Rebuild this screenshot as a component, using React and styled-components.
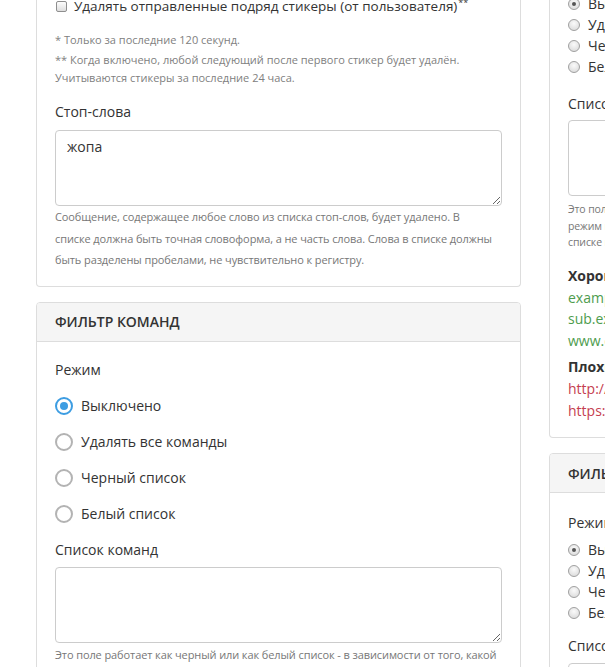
import React from "react";
import styled, { createGlobalStyle } from "styled-components";

/* ---------- global ---------- */

const GlobalStyle = createGlobalStyle`
  html, body {
    margin: 0;
    padding: 0;
    background: #fff;
  }
  body {
    font-family: "Open Sans", "Liberation Sans", sans-serif;
    color: #333;
    overflow: hidden;
  }
`;

/* ---------- layout ---------- */

const Page = styled.div`
  display: flex;
  align-items: flex-start;
  gap: 28px;
  box-sizing: border-box;
  width: 605px;
  height: 667px;
  padding-left: 36px;
  overflow: hidden;
`;

// the page is scrolled, so every column starts a little above the window
const Column = styled.div`
  display: flex;
  flex-direction: column;
  gap: 15px;
  flex-shrink: 0;
  width: 485px;
  margin-top: ${(p) => p.$shift}px;
`;

const Card = styled.section`
  border: 1px solid #ddd;
  border-radius: 4px;
  background: #fff;
  ${(p) =>
    p.$cut &&
    `
    border-top: none;
    border-top-left-radius: 0;
    border-top-right-radius: 0;
  `}
`;

const CardHeader = styled.div`
  display: flex;
  align-items: center;
  height: 38px;
  padding: 0 18px;
  background: #f5f5f5;
  border-bottom: 1px solid #ddd;
  border-radius: 3px 3px 0 0;
  font-size: 14px;
  font-weight: 600;
  text-transform: uppercase;
  color: #333;
`;

const CardBody = styled.div`
  display: flex;
  flex-direction: column;
  padding: ${(p) => p.$top}px 18px ${(p) => p.$bottom ?? 16}px;
`;

/* ---------- form parts ---------- */

const Label = styled.div`
  font-size: 14px;
  line-height: 20px;
  color: #333;
  margin-top: ${(p) => p.$mt || 0}px;
`;

const TextArea = styled.textarea`
  display: block;
  box-sizing: border-box;
  width: 100%;
  height: 76px;
  margin-top: ${(p) => p.$mt || 0}px;
  padding: 6px 11px;
  border: 1px solid #ccc;
  border-radius: 4px;
  font-family: inherit;
  font-size: 14px;
  line-height: 20px;
  color: #333;
  background: #fff;
  outline: none;
`;

const Help = styled.p`
  margin: ${(p) => p.$mt || 0}px 0 0;
  font-size: ${(p) => (p.$small ? 10.5 : 11)}px;
  line-height: ${(p) => (p.$small ? 16.5 : 21.5)}px;
  letter-spacing: -0.1px;
  color: #777;
`;

const Note = styled.p`
  margin: 0 0 2px;
  font-size: 11px;
  line-height: 18px;
  color: #808080;
`;

const CheckRow = styled.label`
  display: flex;
  align-items: center;
  height: 20px;
  margin-bottom: 15px;
  font-size: 13.5px;
  color: #333;
`;

const CheckBox = styled.span`
  box-sizing: border-box;
  width: 11px;
  height: 11px;
  margin: 0 7px 0 1px;
  border: 1px solid #8e8e8e;
  border-radius: 2px;
  background: linear-gradient(#fdfdfd, #dedede);
`;

const Sup = styled.sup`
  font-size: 9px;
  line-height: 0;
  margin-left: 1px;
  position: relative;
  top: -3px;
`;

const RadioList = styled.div`
  display: flex;
  flex-direction: column;
  margin-top: ${(p) => p.$mt || 0}px;
`;

const RadioRow = styled.label`
  display: flex;
  align-items: center;
  height: 36px;
  font-size: 14px;
  color: #333;
`;

const RadioCircle = styled.span`
  box-sizing: border-box;
  display: flex;
  align-items: center;
  justify-content: center;
  width: 18px;
  height: 18px;
  margin-right: 8px;
  border-radius: 50%;
  border: 2px solid ${(p) => (p.$on ? "#3d9de2" : "#b3b3b3")};
  &::after {
    content: "";
    width: 8px;
    height: 8px;
    border-radius: 50%;
    background: ${(p) => (p.$on ? "#3d9de2" : "transparent")};
  }
`;

const SmallRow = styled.label`
  display: flex;
  align-items: center;
  height: 21px;
  font-size: 14px;
  color: #333;
`;

const SmallRadio = styled.span`
  box-sizing: border-box;
  display: flex;
  align-items: center;
  justify-content: center;
  width: 12px;
  height: 12px;
  margin-right: 8px;
  border-radius: 50%;
  border: 1px solid #a0a0a0;
  background: radial-gradient(circle at 50% 35%, #fafafa, #d6d6d6);
  &::after {
    content: "";
    width: 4px;
    height: 4px;
    border-radius: 50%;
    background: ${(p) => (p.$on ? "#555" : "transparent")};
  }
`;

const Strong = styled.div`
  margin-top: ${(p) => p.$mt || 0}px;
  font-size: 14px;
  line-height: 22px;
  font-weight: 700;
  color: #333;
`;

const Example = styled.div`
  font-size: 14px;
  line-height: 21.5px;
  color: ${(p) => (p.$bad ? "#c5404f" : "#4e9c4e")};
`;

/* ---------- components ---------- */

const modes = ["Выключено", "Удалять все команды", "Черный список", "Белый список"];

const BigRadios = ({ mt }) => (
  <RadioList $mt={mt}>
    {modes.map((m, i) => (
      <RadioRow key={m}>
        <RadioCircle $on={i === 0} />
        {m}
      </RadioRow>
    ))}
  </RadioList>
);

const SmallRadios = ({ mt }) => (
  <RadioList $mt={mt}>
    {modes.map((m, i) => (
      <SmallRow key={m}>
        <SmallRadio $on={i === 0} />
        {m}
      </SmallRow>
    ))}
  </RadioList>
);

const App = () => {
  return (
    <>
      <GlobalStyle />
      <Page>
        <Column $shift={-4}>
          <Card $cut>
            <CardBody $top={0} $bottom={15}>
              <CheckRow>
                <CheckBox />
                Удалять отправленные подряд стикеры (от пользователя)
                <Sup>**</Sup>
              </CheckRow>
              <Note>* Только за последние 120 секунд.</Note>
              <Note>
                ** Когда включено, любой следующий после первого стикер будет удалён.
                <br />
                Учитываются стикеры за последние 24 часа.
              </Note>
              <Label $mt={13}>Стоп-слова</Label>
              <TextArea $mt={8} defaultValue="жопа" />
              <Help>
                Сообщение, содержащее любое слово из списка стоп-слов, будет удалено. В
                <br />
                списке должна быть точная словоформа, а не часть слова. Слова в списке должны
                <br />
                быть разделены пробелами, не чувствительно к регистру.
              </Help>
            </CardBody>
          </Card>

          <Card>
            <CardHeader>Фильтр команд</CardHeader>
            <CardBody $top={18}>
              <Label>Режим</Label>
              <BigRadios mt={8} />
              <Label $mt={8}>Список команд</Label>
              <TextArea $mt={7} />
              <Help $mt={1}>
                Это поле работает как черный или как белый список - в зависимости от того, какой
                <br />
                режим выбран.
              </Help>
            </CardBody>
          </Card>
        </Column>

        <Column $shift={-7}>
          <Card $cut>
            <CardBody $top={0}>
              <SmallRadios />
              <Label $mt={17}>Список доменов</Label>
              <TextArea $mt={6} />
              <Help $small $mt={5}>
                Это поле работает как черный или как белый список - в зависимости от того, какой
                <br />
                режим выбран. Домены в списке должны быть разделены пробелами, каждый домен в
                <br />
                списке проверяется вместе с поддоменами.
              </Help>
              <Strong $mt={14}>Хорошие примеры:</Strong>
              <Example>example.com</Example>
              <Example>sub.example.com</Example>
              <Example>www.example.com</Example>
              <Strong $mt={5}>Плохие примеры:</Strong>
              <Example $bad>http://example.com</Example>
              <Example $bad>https://example.com</Example>
            </CardBody>
          </Card>

          <Card>
            <CardHeader>Фильтр ссылок</CardHeader>
            <CardBody $top={20}>
              <Label>Режим</Label>
              <SmallRadios mt={6} />
              <Label $mt={13}>Список доменов</Label>
              <TextArea $mt={7} />
            </CardBody>
          </Card>
        </Column>
      </Page>
    </>
  );
};

export default App;
